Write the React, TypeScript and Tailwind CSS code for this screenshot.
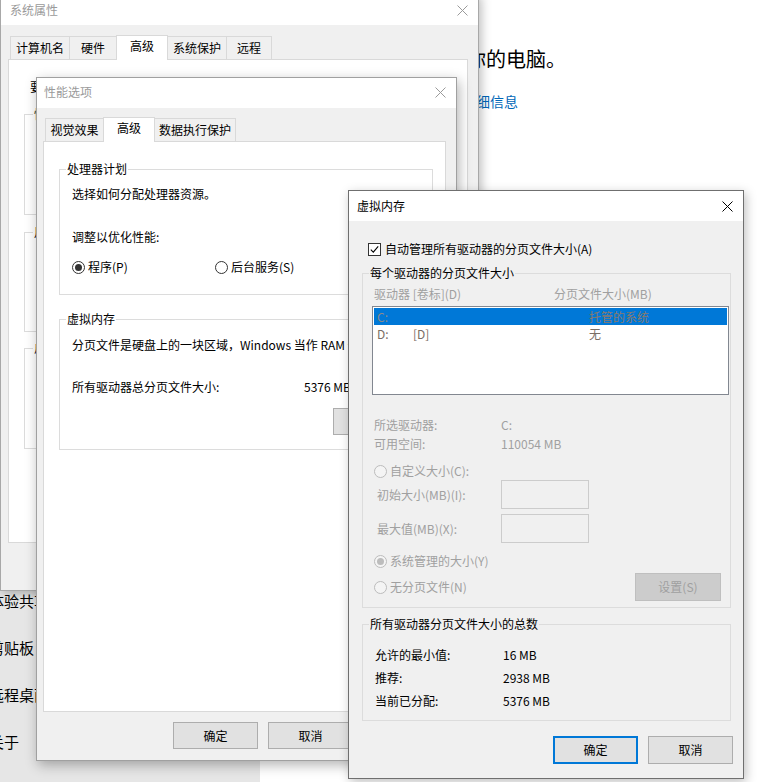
import React from "react";

function CloseX({ active }: { active?: boolean }) {
  const c = active ? "#000000" : "#9a9a9a";
  return (
    <svg width="11" height="11" viewBox="0 0 11 11" className="shrink-0">
      <path d="M0.5 0.5L10.5 10.5M10.5 0.5L0.5 10.5" stroke={c} strokeWidth="1" fill="none" />
    </svg>
  );
}

function Radio({ checked, disabled }: { checked?: boolean; disabled?: boolean }) {
  return (
    <span
      className={`shrink-0 w-[13px] h-[13px] rounded-full border flex items-center justify-center ${
        disabled ? "border-[#bcbcbc] bg-[#f4f4f4]" : "border-[#333333] bg-white"
      }`}
    >
      {checked && (
        <span className={`w-[7px] h-[7px] rounded-full ${disabled ? "bg-[#bcbcbc]" : "bg-[#333333]"}`} />
      )}
    </span>
  );
}

function Checkbox() {
  return (
    <span className="shrink-0 w-[13px] h-[13px] border border-[#333333] bg-white flex items-center justify-center">
      <svg width="9" height="9" viewBox="0 0 9 9">
        <path d="M0.8 4.6L3.3 7.1L8.2 1.4" stroke="#000000" strokeWidth="1.1" fill="none" />
      </svg>
    </span>
  );
}

function GroupBox({
  label,
  className,
  legendClass,
  children,
}: {
  label: string;
  className: string;
  legendClass?: string;
  children?: React.ReactNode;
}) {
  return (
    <fieldset className={`min-w-0 shrink-0 border border-[#dcdcdc] ${className}`}>
      <legend className={`px-[1px] leading-[16px] ${legendClass ?? "ml-[6px]"}`}>{label}</legend>
      {children}
    </fieldset>
  );
}

type Tab = { label: string; cls: string; sel?: boolean };

function TabRow({ tabs }: { tabs: Tab[] }) {
  return (
    <div className="relative z-10 flex items-end h-[25px] ml-[2px]">
      {tabs.map((t, i) =>
        t.sel ? (
          <div
            key={t.label}
            className={`relative z-10 h-[25px] -mb-px bg-white border border-b-0 border-[#d9d9d9] flex items-center justify-center pb-[4px] ${
              i > 0 ? "-ml-px" : ""
            } ${t.cls}`}
          >
            {t.label}
          </div>
        ) : (
          <div
            key={t.label}
            className={`h-[23px] bg-[#f0f0f0] border border-b-0 border-[#d9d9d9] flex items-center justify-center ${
              i > 0 ? "-ml-px" : ""
            } ${t.cls}`}
          >
            {t.label}
          </div>
        )
      )}
    </div>
  );
}

function Btn({ children, primary }: { children: React.ReactNode; primary?: boolean }) {
  return (
    <button
      className={`shrink-0 w-[85px] h-[27px] bg-[#e1e1e1] flex items-center justify-center ${
        primary ? "border-2 border-[#0078d7]" : "border border-[#adadad]"
      }`}
    >
      {children}
    </button>
  );
}

export default function App() {
  return (
    <div className="relative w-[759px] h-[782px] overflow-hidden bg-white text-black text-[12px] leading-[16px] font-['Microsoft_YaHei_UI','Noto_Sans_CJK_SC',sans-serif]">
      {/* Settings app in the background */}
      <div className="flex h-full">
        <div className="w-[260px] h-full bg-[#e6e6e6] pt-[577px] text-[15px] leading-[20px] overflow-hidden">
          {["体验共享", "剪贴板", "远程桌面", "关于"].map((t) => (
            <div key={t} className="h-[47px] flex items-center ml-[-11px] whitespace-nowrap">
              {t}
            </div>
          ))}
        </div>
        <div className="flex-1 pt-[46px] whitespace-nowrap">
          <div className="w-[306px] flex justify-end text-[20px] leading-[26px]">系统正在监视并保护你的电脑。</div>
          <div className="w-[258px] mt-[19px] flex justify-end text-[14px] leading-[20px] text-[#0067b8]">
            在 Windows 安全中心中查看详细信息
          </div>
        </div>
      </div>

      {/* 系统属性 */}
      <div className="absolute left-0 top-[-6px] w-[479px] h-[597px] bg-[#f0f0f0] border border-[#a8a8a8] shadow-[2px_2px_10px_rgba(0,0,0,0.28)] flex flex-col">
        <div className="h-[30px] shrink-0 bg-white flex items-center justify-between pl-[9px] pr-[10px] text-[#9a9a9a]">
          <span>系统属性</span>
          <CloseX />
        </div>
        <div className="pl-[7px] pt-[9px]">
          <TabRow
            tabs={[
              { label: "计算机名", cls: "w-[60px]" },
              { label: "硬件", cls: "w-[48px]" },
              { label: "高级", cls: "w-[52px]", sel: true },
              { label: "系统保护", cls: "w-[60px]" },
              { label: "远程", cls: "w-[46px]" },
            ]}
          />
          <div className="w-[460px] h-[484px] bg-white border border-[#d9d9d9] pl-[21px] pt-[19px] whitespace-nowrap flex flex-col">
            <div>要进行大多数更改，你必须作为管理员登录。</div>
            <GroupBox label="性能" className="ml-[-6px] mt-[11px] w-[428px] h-[109px]" legendClass="ml-[8px]">
              <div className="pl-[12px] pt-[8px]">视觉效果，处理器计划，内存使用，以及虚拟内存</div>
            </GroupBox>
            <GroupBox label="用户配置文件" className="ml-[-6px] mt-[9px] w-[428px] h-[108px]" legendClass="ml-[8px]">
              <div className="pl-[12px] pt-[8px]">与登录帐户相关的桌面设置</div>
            </GroupBox>
            <GroupBox label="启动和故障恢复" className="ml-[-6px] mt-[8px] w-[428px] h-[109px]" legendClass="ml-[8px]">
              <div className="pl-[12px] pt-[8px]">系统启动、系统故障和调试信息</div>
            </GroupBox>
          </div>
        </div>
      </div>

      {/* 性能选项 */}
      <div className="absolute left-[36px] top-[77px] w-[421px] h-[684px] bg-[#f0f0f0] border border-[#a0a0a0] shadow-[2px_4px_12px_rgba(0,0,0,0.3)] flex flex-col">
        <div className="h-[30px] shrink-0 bg-white flex items-center justify-between pl-[7px] pr-[10px] pb-[2px] text-[#9a9a9a]">
          <span>性能选项</span>
          <CloseX />
        </div>
        <div className="pl-[6px] pt-[8px]">
          <TabRow
            tabs={[
              { label: "视觉效果", cls: "w-[59px]" },
              { label: "高级", cls: "w-[52px]", sel: true },
              { label: "数据执行保护", cls: "w-[82px]" },
            ]}
          />
          <div className="w-[403px] h-[571px] bg-white border border-[#d9d9d9] pt-[19px] pl-[15px] whitespace-nowrap flex flex-col">
            <GroupBox label="处理器计划" className="w-[374px] h-[134px]">
              <div className="flex flex-col pl-[12px]">
                <div className="mt-[9px]">选择如何分配处理器资源。</div>
                <div className="mt-[27px]">调整以优化性能:</div>
                <div className="flex items-center mt-[14px]">
                  <div className="w-[143px] flex items-center gap-[3px]">
                    <Radio checked />
                    <span>程序(P)</span>
                  </div>
                  <div className="flex items-center gap-[3px]">
                    <Radio />
                    <span>后台服务(S)</span>
                  </div>
                </div>
              </div>
            </GroupBox>
            <GroupBox label="虚拟内存" className="mt-[16px] w-[374px] h-[139px]">
              <div className="flex flex-col pl-[12px]">
                <div className="mt-[10px]">分页文件是硬盘上的一块区域，Windows 当作 RAM 使用。</div>
                <div className="flex mt-[26px]">
                  <span className="w-[232px]">所有驱动器总分页文件大小:</span>
                  <span>5376 MB</span>
                </div>
                <div className="mt-[13px] ml-[261px]">
                  <Btn>更改(C)...</Btn>
                </div>
              </div>
            </GroupBox>
          </div>
          <div className="flex justify-end gap-[10px] pr-[8px] mt-[10px]">
            <Btn>确定</Btn>
            <Btn>取消</Btn>
            <Btn>应用(A)</Btn>
          </div>
        </div>
      </div>

      {/* 虚拟内存 */}
      <div className="absolute left-[348px] top-[190px] w-[396px] h-[589px] bg-[#f0f0f0] border border-[#6f6f6f] shadow-[2px_3px_10px_rgba(0,0,0,0.25)] flex flex-col whitespace-nowrap">
        <div className="h-[30px] shrink-0 bg-white flex items-center justify-between pl-[8px] pr-[10px]">
          <span>虚拟内存</span>
          <CloseX active />
        </div>
        <div className="pl-[13px] flex flex-col">
          <div className="flex items-center gap-[4px] ml-[6px] mt-[20px]">
            <Checkbox />
            <span>自动管理所有驱动器的分页文件大小(A)</span>
          </div>

          <GroupBox label="每个驱动器的分页文件大小" className="mt-[8px] w-[369px] h-[343px]">
            <div className="flex flex-col pl-[11px] text-[#a0a0a0]">
              <div className="flex mt-[5px]">
                <span className="w-[180px]">驱动器 [卷标](D)</span>
                <span>分页文件大小(MB)</span>
              </div>
              <div className="ml-[-2px] mt-[4px] w-[357px] h-[89px] bg-white border border-[#828790] p-[1px] text-[#7a6e64]">
                <div className="h-[17px] bg-[#0078d7] flex items-center pl-[3px] text-[#8c8a88]">
                  <span className="w-[212px]">C:</span>
                  <span className="text-[#8a7a6c]">托管的系统</span>
                </div>
                <div className="h-[17px] flex items-center pl-[3px]">
                  <span className="w-[36px]">D:</span>
                  <span className="w-[176px]">[D]</span>
                  <span>无</span>
                </div>
              </div>
              <div className="flex mt-[22px]">
                <span className="w-[127px]">所选驱动器:</span>
                <span>C:</span>
              </div>
              <div className="flex mt-[3px]">
                <span className="w-[127px]">可用空间:</span>
                <span>110054 MB</span>
              </div>
              <div className="flex items-center gap-[3px] mt-[11px]">
                <Radio disabled />
                <span>自定义大小(C):</span>
              </div>
              <div className="flex items-center mt-[1px]">
                <span className="w-[127px] pl-[3px]">初始大小(MB)(I):</span>
                <span className="w-[88px] h-[29px] border border-[#cccccc] bg-[#f0f0f0]" />
              </div>
              <div className="flex items-center mt-[5px]">
                <span className="w-[127px] pl-[3px]">最大值(MB)(X):</span>
                <span className="w-[88px] h-[29px] border border-[#cccccc] bg-[#f0f0f0]" />
              </div>
              <div className="flex items-center gap-[3px] mt-[10px]">
                <Radio disabled checked />
                <span>系统管理的大小(Y)</span>
              </div>
              <div className="flex items-center justify-between w-[347px] h-[28px] mt-[4px]">
                <div className="flex items-center gap-[3px]">
                  <Radio disabled />
                  <span>无分页文件(N)</span>
                </div>
                <span className="w-[86px] h-[28px] bg-[#cccccc] border border-[#bfbfbf] flex items-center justify-center text-[#a0a0a0]">
                  设置(S)
                </span>
              </div>
            </div>
          </GroupBox>

          <GroupBox label="所有驱动器分页文件大小的总数" className="mt-[8px] w-[369px] h-[105px]">
            <div className="flex flex-col pl-[12px]">
              <div className="flex mt-[15px]">
                <span className="w-[128px]">允许的最小值:</span>
                <span>16 MB</span>
              </div>
              <div className="flex mt-[7px]">
                <span className="w-[128px]">推荐:</span>
                <span>2938 MB</span>
              </div>
              <div className="flex mt-[7px]">
                <span className="w-[128px]">当前已分配:</span>
                <span>5376 MB</span>
              </div>
            </div>
          </GroupBox>

          <div className="flex justify-end gap-[10px] pr-[10px] mt-[15px]">
            <button className="shrink-0 w-[85px] h-[28px] bg-[#e1e1e1] border-2 border-[#0078d7] flex items-center justify-center">
              确定
            </button>
            <button className="shrink-0 w-[85px] h-[28px] bg-[#e1e1e1] border border-[#adadad] flex items-center justify-center">
              取消
            </button>
          </div>
        </div>
      </div>
    </div>
  );
}
